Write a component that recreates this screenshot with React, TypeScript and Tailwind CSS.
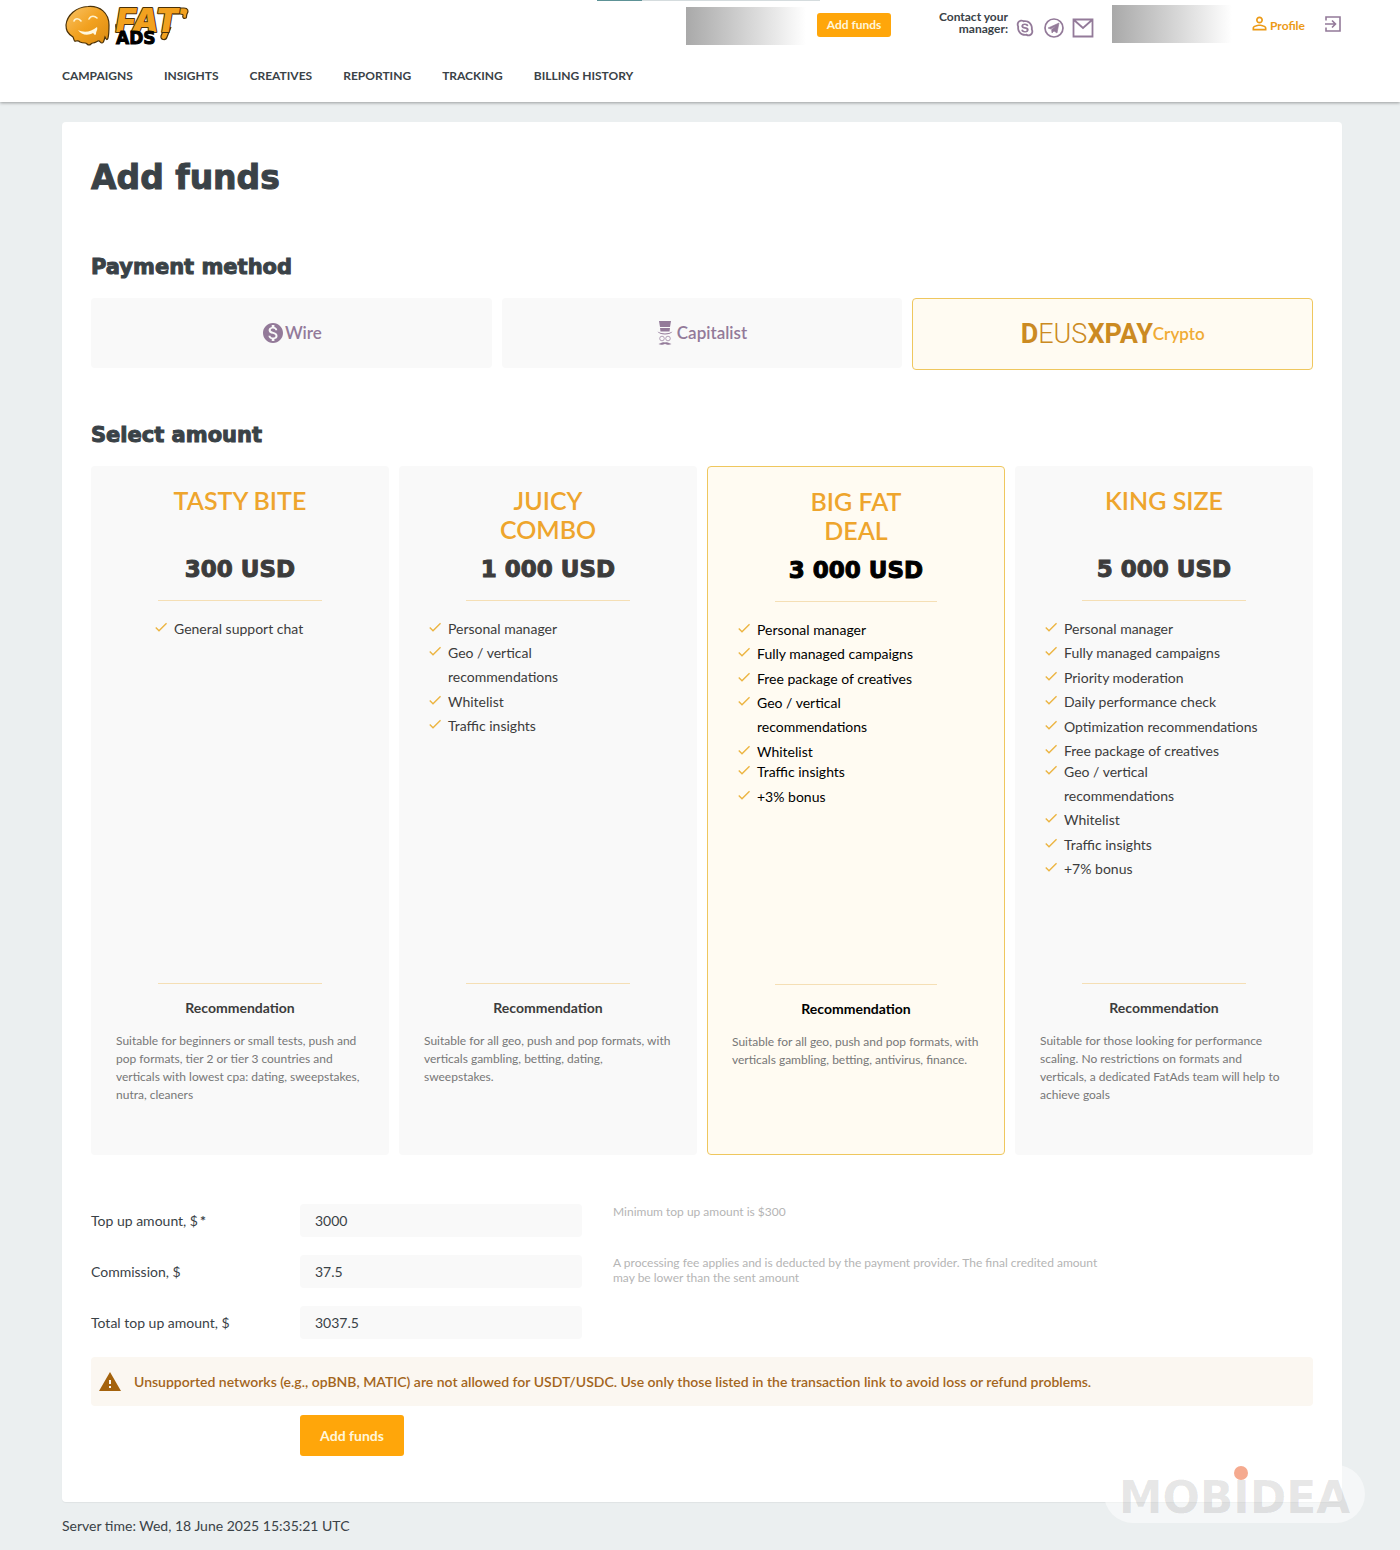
import { useState } from 'react'

import { MdCheck, MdMonetizationOn, MdPersonOutline, MdWarning } from 'react-icons/md'
import { RiSkypeLine } from 'react-icons/ri'
import clsx from 'clsx'

interface Plan {
  name: string
  price: string
  amount: number
  features: string[]
  // index of the first feature of the second, tighter block
  tightAt?: number
  text: string
}

const menu = ['CAMPAIGNS', 'INSIGHTS', 'CREATIVES', 'REPORTING', 'TRACKING', 'BILLING HISTORY']

const plans: Plan[] = [
  {
    name: 'TASTY BITE',
    price: '300 USD',
    amount: 300,
    features: ['General support chat'],
    text: 'Suitable for beginners or small tests, push and pop formats, tier 2 or tier 3 countries and verticals with lowest cpa: dating, sweepstakes, nutra, cleaners',
  },
  {
    name: 'JUICY COMBO',
    price: '1 000 USD',
    amount: 1000,
    features: ['Personal manager', 'Geo / vertical\nrecommendations', 'Whitelist', 'Traffic insights'],
    text: 'Suitable for all geo, push and pop formats, with verticals gambling, betting, dating, sweepstakes.',
  },
  {
    name: 'BIG FAT DEAL',
    price: '3 000 USD',
    amount: 3000,
    features: [
      'Personal manager',
      'Fully managed campaigns',
      'Free package of creatives',
      'Geo / vertical\nrecommendations',
      'Whitelist',
      'Traffic insights',
      '+3% bonus',
    ],
    tightAt: 5,
    text: 'Suitable for all geo, push and pop formats, with verticals gambling, betting, antivirus, finance.',
  },
  {
    name: 'KING SIZE',
    price: '5 000 USD',
    amount: 5000,
    features: [
      'Personal manager',
      'Fully managed campaigns',
      'Priority moderation',
      'Daily performance check',
      'Optimization recommendations',
      'Free package of creatives',
      'Geo / vertical\nrecommendations',
      'Whitelist',
      'Traffic insights',
      '+7% bonus',
    ],
    tightAt: 6,
    text: 'Suitable for those looking for performance scaling. No restrictions on formats and verticals, a dedicated FatAds team will help to achieve goals',
  },
]

const Logo = () => (
  <svg viewBox="0 0 130 48" className="h-12 w-[130px] overflow-visible" role="img" aria-label="Fat Ads">
    <defs>
      <linearGradient id="blob" x1="0" y1="0" x2="1" y2="1">
        <stop offset="0" stopColor="#f8c469" />
        <stop offset="0.5" stopColor="#f2a11f" />
        <stop offset="1" stopColor="#d98a12" />
      </linearGradient>
    </defs>
    <path
      d="M26 .5C38-.5 47 7 47 19c0 6 0 9-1 13-1 3-2 1-3-1-1 3-1 6-3 6-2 0-2-3-4-2-2 1-3 2-5 2-2 0-2 2-4 2-2 0-2-2-4-2-2 0-3 0-5-1-2-2-2-1-4-1-2 1-2-2-3-4C5 27 4 24 4 19 5 9 14 1 26 .5Z"
      fill="url(#blob)"
      stroke="#4a3108"
      strokeWidth="1.2"
    />
    <g fill="none" stroke="#fff3cf" strokeLinecap="round">
      <path d="M12 15c1-3 5-3 7 0" strokeWidth="1.6" />
      <path d="M27 13c2-4 6-3 8-1" strokeWidth="1.6" />
    </g>
    <path d="M16 24c6 3 13 2 19-3 1 3-1 4-1 7-1 2-2 0-3-1-5 3-12 2-15-3Z" fill="#fff8df" />
    <g fill="#f2a11f" stroke="#4a3108" strokeWidth="1.200">
      <path d="M54 18c-1 3 1 8 2 8 4 1 4-3 5-8M103 20l-4 10c-1 4 5 5 6 1l4-10" />
      <path d="M110 2h12c4 0 5 3 3 6-1 3 0 3-1 4-2 1-4 0-3-3 0-1-1-1-3-1h-7" />
    </g>
    <text
      x="54"
      y="26"
      fontFamily="Inter, sans-serif"
      fontSize="33"
      fontWeight="900"
      fontStyle="italic"
      fill="#f2a11f"
      stroke="#4a3108"
      strokeWidth="2"
      strokeLinejoin="round"
      paintOrder="stroke"
    >
      FAT
    </text>
    <text x="54" y="38" fontFamily="DejaVu Sans, sans-serif" fontSize="17" fontWeight="700" fill="#000" stroke="#000" strokeWidth="1">
      ADS
    </text>
  </svg>
)

const TelegramIcon = () => (
  <svg viewBox="0 0 20 20" className="size-5" fill="none">
    <circle cx="10" cy="10" r="9" stroke="#937a99" strokeWidth="1.7" />
    <path d="M4 10 15 5l-2 10-3-2-2 2-.4-3.500L12 8l-5.500 3Z" fill="#937a99" stroke="#937a99" strokeWidth=".6" />
  </svg>
)

const MailIcon = () => (
  <svg viewBox="0 0 22 20" className="h-5 w-[22px]" fill="none" stroke="#937a99" strokeWidth="1.800">
    <path d="M1.500 1.500h19v17h-19ZM2 2l9 8 9-8" />
  </svg>
)

const ExitIcon = () => (
  <svg viewBox="0 0 18 18" className="size-[18px]" fill="none" stroke="#937a99" strokeWidth="1.600">
    <path d="M2 5.500V2h14v14H2v-3.500M1 9h10M8 5.500 11.500 9 8 12.500" />
  </svg>
)

const CapitalistIcon = () => (
  <svg viewBox="0 0 16 26" className="h-[26px] w-4" fill="#937a99">
    <path d="M2 1h12l-1 6H3ZM3 8h10l-.5 3.500h-9Z" />
    <path d="M.5 11.500c4 2.500 11 2.500 15 0-2 4-13 4-15 0Z" />
    <circle cx="5" cy="18.500" r="2.300" fill="none" stroke="#937a99" strokeWidth=".7" />
    <circle cx="11" cy="18.500" r="2.300" fill="none" stroke="#937a99" strokeWidth=".7" />
    <path d="M8 22.500c3-1 4 1 6.500 1.500-2.500 1.500-5 .5-6.500-.3-1.500.8-4 1.800-6.500.3 2.500-.5 3.500-2.500 6.500-1.500Z" />
  </svg>
)

const Header = () => (
  <header className="relative bg-white pr-[58px] pl-[62px] shadow-[0_1px_3px_rgba(0,0,0,0.35)]">
    <div className="absolute top-0 left-[597px] flex h-px w-[223px] bg-[#d5dcde]">
      <span className="w-[45px] bg-[#5d9296]" />
    </div>
    <div className="flex h-[62px] items-start pt-[5px]">
      <a href="#" className="mr-auto pt-px">
        <Logo />
      </a>
      <div className="mt-[2px] h-[38px] w-[120px] bg-gradient-to-r from-[#a9a9a9] to-white" />
      <button className="mt-2 ml-[11px] h-[24px] w-[74px] rounded-[3px] bg-[#ffa60a] text-[12px] font-bold text-[#fff6da]">
        Add funds
      </button>
      <p className="mt-[6px] ml-[45px] w-[72px] text-right text-[12px] leading-3 font-bold">Contact your manager:</p>
      <div className="mt-[12px] ml-[6px] flex items-center gap-[8px]">
        <a href="#" aria-label="Skype">
          <RiSkypeLine className="size-[22px] text-[#937a99]" />
        </a>
        <a href="#" aria-label="Telegram">
          <TelegramIcon />
        </a>
        <a href="#" aria-label="Email">
          <MailIcon />
        </a>
      </div>
      <div className="ml-[18px] h-[38px] w-[120px] bg-gradient-to-r from-[#a9a9a9] to-white" />
      <a href="#" className="mt-2 ml-[17px] flex items-center text-[12px] leading-6 font-bold text-[#ec9a16]">
        <MdPersonOutline className="mb-1 size-[21px]" />
        Profile
      </a>
      <a href="#" aria-label="Log out" className="mt-[10px] ml-[19px]">
        <ExitIcon />
      </a>
    </div>
    <nav className="flex gap-[31px] pt-1 pb-[16px] text-[12px] leading-5 font-bold">
      {menu.map((item) => (
        <a key={item} href="#">
          {item}
        </a>
      ))}
    </nav>
  </header>
)

const Heading = ({ children }: { children: string }) => (
  <h2 className="mb-[19px] font-['DejaVu_Sans',sans-serif] text-[21px] leading-6 font-bold [-webkit-text-stroke:1px]">
    {children}
  </h2>
)

const Line = () => <div className="mx-auto h-px w-[55%] bg-[#f5dfb5]" />

const PlanCard = ({ plan, active, onSelect }: { plan: Plan; active: boolean; onSelect: () => void }) => (
  <label
    className={clsx(
      'flex cursor-pointer flex-col rounded pt-5',
      active ? 'border border-[#efc75e] bg-[#fffbf2] text-black' : 'bg-[#f9f9f9] text-[#3c3c3c]',
    )}
  >
    <input type="radio" name="plan" className="sr-only" checked={active} onChange={onSelect} />
    <h3 className="mx-auto min-h-[58px] w-1/2 text-center text-[25px] leading-[29px] font-semibold text-[#eea52d]">
      {plan.name}
    </h3>
    <p className="mt-[11px] mb-[17px] text-center font-['DejaVu_Sans',sans-serif] text-[23px] leading-7 font-bold [-webkit-text-stroke:1px]">
      {plan.price}
    </p>
    <Line />
    <ul className={clsx('mt-4 min-h-[366px] text-[14px] leading-6', plan.features.length === 1 ? 'pl-[62px]' : 'pl-[28px]')}>
      {plan.features.map((feature, i) => (
        <li key={feature} className={clsx('flex even:mb-px', i === plan.tightAt && '-mt-1')}>
          <MdCheck className="mt-[2px] mr-[5px] size-4 shrink-0 text-[#ecb440]" />
          <span className="whitespace-pre-line">{feature}</span>
        </li>
      ))}
    </ul>
    <Line />
    <h4 className="mt-[14px] text-center text-[14px] leading-5 font-bold">Recommendation</h4>
    <p className={clsx('mt-[14px] min-h-[121px] text-[12px] leading-[18px] text-[#777]', active ? 'px-6' : 'px-[25px]')}>
      {plan.text}
    </p>
  </label>
)

const fieldClass = 'h-[33px] w-full rounded-sm bg-[#f9f9f9] px-[15px] text-[14px]'
const rowClass = 'grid grid-cols-[209px_282px_minmax(0,530px)]'
const labelClass = 'text-[14px] leading-[33px]'
const hintClass = 'ml-[31px] text-[12px] leading-[15px] text-[#b5b5b5]'

export default function App() {
  const [method, setMethod] = useState('crypto')
  const [amount, setAmount] = useState('3000')
  const fee = Number(amount) * 0.0125

  const methodClass = (id: string) =>
    clsx(
      'flex items-center justify-center rounded text-[17px] font-semibold',
      method === id
        ? 'h-[72px] border border-[#efc75e] bg-[#fffbf2] text-[#f0ab35]'
        : 'h-[70px] bg-[#f9f9f9] text-[#937a99]',
    )

  return (
    <div className="relative min-h-screen bg-[#ebeff0] font-[Lato,sans-serif] text-[#3a4247]">
      <Header />
      <main className="mt-5 mr-[58px] ml-[62px] rounded-sm bg-white px-[29px] pt-9 pb-[46px] shadow-[0_1px_1px_rgba(0,0,0,0.05)]">
        <h1 className="mb-[57px] font-['DejaVu_Sans',sans-serif] text-[33px] leading-10 font-bold [-webkit-text-stroke:1px]">
          Add funds
        </h1>

        <Heading>Payment method</Heading>
        <div className="grid grid-cols-3 items-start gap-[10px]">
          <button className={methodClass('wire')} onClick={() => setMethod('wire')}>
            <MdMonetizationOn className="size-6" />
            Wire
          </button>
          <button className={methodClass('capitalist')} onClick={() => setMethod('capitalist')}>
            <span className="mr-1">
              <CapitalistIcon />
            </span>
            Capitalist
          </button>
          <button className={methodClass('crypto')} onClick={() => setMethod('crypto')}>
            <span className="font-[Roboto,sans-serif] text-[27px] font-bold text-[#cb8a22]">
              D<span className="font-light">EUS</span>XPAY
            </span>
            Crypto
          </button>
        </div>

        <div className="mt-[53px]">
          <Heading>Select amount</Heading>
        </div>
        <div className="grid grid-cols-4 gap-[10px]">
          {plans.map((plan) => (
            <PlanCard
              key={plan.name}
              plan={plan}
              active={Number(amount) === plan.amount}
              onSelect={() => setAmount(String(plan.amount))}
            />
          ))}
        </div>

        <form className="pt-[49px]" onSubmit={(e) => e.preventDefault()}>
          <div className={rowClass}>
            <label htmlFor="amount" className={labelClass}>
              Top up amount, $<b className="ml-[2px]">*</b>
            </label>
            <input id="amount" className={fieldClass} value={amount} onChange={(e) => setAmount(e.target.value)} />
            <p className={hintClass}>Minimum top up amount is $300</p>
          </div>
          <div className={clsx(rowClass, 'mt-[18px]')}>
            <label htmlFor="fee" className={labelClass}>
              Commission, $
            </label>
            <input id="fee" className={fieldClass} value={fee} readOnly />
            <p className={hintClass}>
              A processing fee applies and is deducted by the payment provider. The final credited amount may be lower
              than the sent amount
            </p>
          </div>
          <div className={clsx(rowClass, 'mt-[18px]')}>
            <label htmlFor="total" className={labelClass}>
              Total top up amount, $
            </label>
            <input id="total" className={fieldClass} value={Number(amount) + fee} readOnly />
          </div>
          <div className="mt-[18px] flex h-[49px] items-center rounded-sm bg-[#fbf7f1] pl-[7px] text-[14px] font-semibold text-[#a3651c]">
            <MdWarning className="mr-3 size-6 text-[#a4620c]" />
            Unsupported networks (e.g., opBNB, MATIC) are not allowed for USDT/USDC. Use only those listed in the
            transaction link to avoid loss or refund problems.
          </div>
          <button className="mt-[9px] ml-[209px] block h-[41px] w-[104px] rounded-[3px] bg-[#ffa60a] text-[14px] font-bold text-[#fff6da]">
            Add funds
          </button>
        </form>
      </main>
      <footer className="py-[14px] pl-[62px] text-[14px] leading-5">Server time: Wed, 18 June 2025 15:35:21 UTC</footer>

      <div className="absolute right-[35px] bottom-[27px] flex h-[58px] w-[261px] items-center justify-center rounded-full bg-white/50 pt-2 font-['DejaVu_Sans',sans-serif] text-[44px] leading-none font-bold text-black/10">
        MOB
        <span className="relative">
          I
          <span className="absolute -top-[10px] left-px size-[14px] rounded-full bg-[#f5aa8f]" />
        </span>
        DEA
      </div>
    </div>
  )
}
